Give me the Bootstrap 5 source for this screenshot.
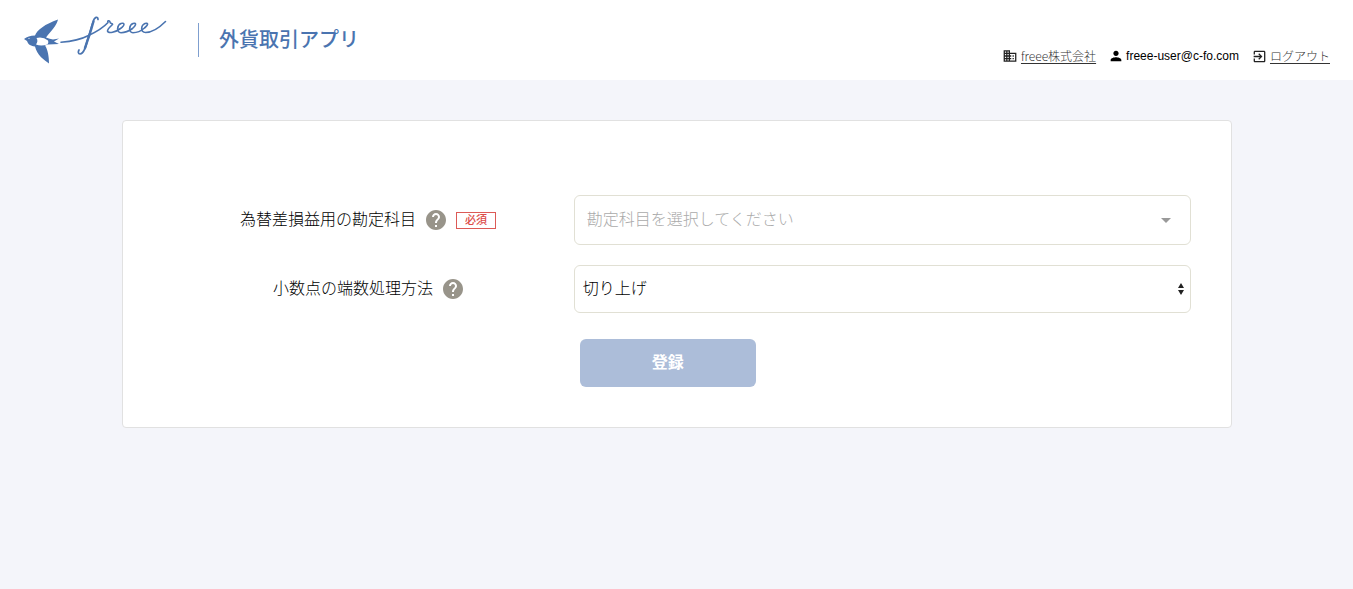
<!DOCTYPE html>
<html lang="ja">
<head>
<meta charset="utf-8">
<meta name="viewport" content="width=device-width, initial-scale=1">
<title>外貨取引アプリ</title>
<link href="https://cdn.jsdelivr.net/npm/bootstrap@5.3.0/dist/css/bootstrap.min.css" rel="stylesheet">
<style>
body{background:#f4f5fa;color:#000;font-family:"Liberation Sans","Noto Sans CJK JP",sans-serif}
.site-head{min-height:80px;padding:0 23px;background:#fff}
.brand-link{color:#4a74b0}
.brand-title{font-size:20px;line-height:34px;font-weight:500;border-left:1px solid #7f9fcf;margin-left:30px;padding-left:20px}
.user-nav{font-size:12px;line-height:18px;gap:14px;padding-bottom:15px}
.user-nav a{color:#333;font-family:"Noto Sans CJK JP",sans-serif;font-weight:300;text-underline-offset:2px}
.page-box{max-width:1140px;padding:40px 15px}
.form-panel{border:1px solid #e1e1e1;border-radius:4px;padding:74px 40px 40px}
.form-label-row{gap:10px}
.form-line{font-weight:300;margin-bottom:20px}
.help-btn{width:20px;height:20px;color:#98948a}
.must-tag{border:1px solid #dc5a56;color:#dc4a46;font-size:11px;line-height:15px;padding:0 8px;font-weight:500}
.field-box{border:1px solid #e1e0d4;border-radius:6px;height:48px;font-size:16px;font-weight:300;background:#fff;color:#000;appearance:none}
.pick-account{height:50px;padding:0 48px 0 12px;color:#aaa}
.pick-round{padding:0 24px 0 8px}
.caret-a{right:19px;color:#999}
.caret-b{right:7px;color:#222}
.label-col{flex:0 0 40%}
.btn-save{width:176px;height:48px;margin:6px 0 0 6px;border:0;border-radius:6px;background:#acbdd9;color:#fff;font-weight:700}
@media (max-width:767px){.form-panel{padding:24px}.label-col{flex-basis:100%}}
</style>
<script src="https://cdn.jsdelivr.net/npm/bootstrap@5.3.0/dist/js/bootstrap.bundle.min.js" defer></script>
</head>
<body>
<header class="site-head d-flex flex-wrap justify-content-between">
<a href="#" class="brand-link d-flex align-items-center text-decoration-none">
<svg width="145" height="56" viewBox="23 12 145 56" fill="none" stroke="currentColor" stroke-linecap="round" stroke-linejoin="round" role="img" aria-label="freee">
<g fill="currentColor" stroke="none">
<path d="M24 39C27 37 30 35.500 35 35.500C37 30 45 24 58 19.500C57 25 51 31 46 37.500Q50 39 53 39.500L59 38.500L54 41.500L59 44L48 44.500L45 45.500C48 50 49 57 49 63.500C44 60 37 55 35 46.500C30 46 28 44 27 41Z"/>
<path d="M36.500 38Q43 36.500 48 40.500Q49 42 47.500 44.500Q41 46.500 36 44.500Q38.500 41 36.500 38Z" fill="#fff"/>
<circle cx="29" cy="38.500" r=".6" fill="#fff"/>
</g>
<path stroke-width="1.600" d="M61 42.300C71 41.500 81 39.500 88 35.800C96 32 104 27 108 22.500C107 20.500 109.500 20 110 22C110 24 113 23 112.500 24.500C110 27 107.500 29 107.500 31C108 34 116 32 120.500 28.500C126 24.500 124 22.500 121 23.500C117 25 116 32.500 121 32.700C125 32.700 129 31 132.500 28.500C137 24.500 136 22.500 133 23.500C129 25 128 32.500 133 32.700C137 32.700 141 31 144.500 28C149 24.500 148 22.500 145 23.500C141 25 140 32.500 145.500 32.500C153 32.500 160 27 165.500 21.500"/>
<path stroke-width="1.700" d="M98 19.500C98 16 94.500 16.500 93 22C91 28 90 33 87.500 40C86 46 84 54 80 54C78 54 78 51.500 79 50"/>
<path stroke-width="2.400" d="M93.500 21.500C91.500 28 90 34 87.500 40.500L85 48"/>
</svg>
<span class="brand-title">外貨取引アプリ</span>
</a>
<nav class="user-nav d-flex flex-wrap align-items-end" aria-label="アカウント">
<span class="d-flex align-items-center gap-1"><svg width="14" height="14" viewBox="1 2 22 20" fill="#222" aria-hidden="true"><path d="M12 7V3H2v18h20V7H12zM6 19H4v-2h2v2zm0-4H4v-2h2v2zm0-4H4V9h2v2zm0-4H4V5h2v2zm4 12H8v-2h2v2zm0-4H8v-2h2v2zm0-4H8V9h2v2zm0-4H8V5h2v2zm10 12h-8v-2h2v-2h-2v-2h2v-2h-2V9h8v10zm-2-8h-2v2h2v-2zm0 4h-2v2h2v-2z"/></svg><a href="#">freee株式会社</a></span>
<span class="d-flex align-items-center gap-1"><svg width="12" height="12" viewBox="3 3 18 18" aria-hidden="true"><path d="M12 12c2.200 0 4-1.800 4-4s-1.800-4-4-4-4 1.800-4 4 1.800 4 4 4zm0 2c-2.700 0-8 1.300-8 4v2h16v-2c0-2.700-5.300-4-8-4z"/></svg>freee-user@c-fo.com</span>
<span class="d-flex align-items-center gap-1"><svg width="13" height="13" viewBox="2 2 20 20" fill="#222" aria-hidden="true"><path d="M10.090 15.590L11.500 17l5-5-5-5-1.410 1.410L12.670 11H3v2h9.670l-2.580 2.590zM19 3H5c-1.110 0-2 .9-2 2v4h2V5h14v14H5v-4H3v4c0 1.100.89 2 2 2h14c1.100 0 2-.9 2-2V5c0-1.100-.9-2-2-2z"/></svg><a href="#">ログアウト</a></span>
</nav>
</header>
<main class="container page-box">
<form class="form-panel bg-white">
<div class="row g-0 align-items-center form-line">
<div class="label-col form-label-row d-flex justify-content-center align-items-center">
<label for="account">為替差損益用の勘定科目</label>
<button type="button" class="help-btn btn p-0 border-0 d-flex" aria-label="ヘルプ"><svg width="20" height="20" viewBox="2 2 20 20" fill="currentColor" aria-hidden="true"><path d="M12 2C6.480 2 2 6.480 2 12s4.480 10 10 10 10-4.480 10-10S17.520 2 12 2zm1 17h-2v-2h2v2zm2.070-7.750l-.9.920C13.450 12.900 13 13.500 13 15h-2v-.5c0-1.100.45-2.100 1.170-2.830l1.240-1.260c.37-.36.59-.86.59-1.410 0-1.100-.9-2-2-2s-2 .9-2 2H8c0-2.210 1.790-4 4-4s4 1.790 4 4c0 .88-.36 1.680-.93 2.250z"/></svg></button>
<span class="must-tag">必須</span>
</div>
<div class="col-12 col-md position-relative d-flex align-items-center">
<select id="account" class="field-box pick-account w-100"><option>勘定科目を選択してください</option></select>
<svg class="caret-a position-absolute pe-none" width="12" height="5" viewBox="0 0 12 5" aria-hidden="true"><path d="M1 0h10L6 5z" fill="currentColor"/></svg>
</div>
</div>
<div class="row g-0 align-items-center form-line">
<div class="label-col form-label-row d-flex justify-content-center align-items-center">
<label for="rounding">小数点の端数処理方法</label>
<button type="button" class="help-btn btn p-0 border-0 d-flex" aria-label="ヘルプ"><svg width="20" height="20" viewBox="2 2 20 20" fill="currentColor" aria-hidden="true"><path d="M12 2C6.480 2 2 6.480 2 12s4.480 10 10 10 10-4.480 10-10S17.520 2 12 2zm1 17h-2v-2h2v2zm2.070-7.750l-.9.920C13.450 12.900 13 13.500 13 15h-2v-.5c0-1.100.45-2.100 1.170-2.830l1.240-1.260c.37-.36.59-.86.59-1.410 0-1.100-.9-2-2-2s-2 .9-2 2H8c0-2.210 1.790-4 4-4s4 1.790 4 4c0 .88-.36 1.680-.93 2.250z"/></svg></button>
</div>
<div class="col-12 col-md position-relative d-flex align-items-center">
<select id="rounding" class="field-box pick-round w-100"><option>切り上げ</option></select>
<svg class="caret-b position-absolute pe-none" width="6" height="12" viewBox="0 0 6 12" aria-hidden="true"><path d="M0 5L3 0l3 5zM0 7h6l-3 5z" fill="currentColor"/></svg>
</div>
</div>
<div class="row g-0">
<div class="label-col"></div>
<div class="col-12 col-md"><button type="submit" class="btn-save">登録</button></div>
</div>
</form>
</main>
</body>
</html>
